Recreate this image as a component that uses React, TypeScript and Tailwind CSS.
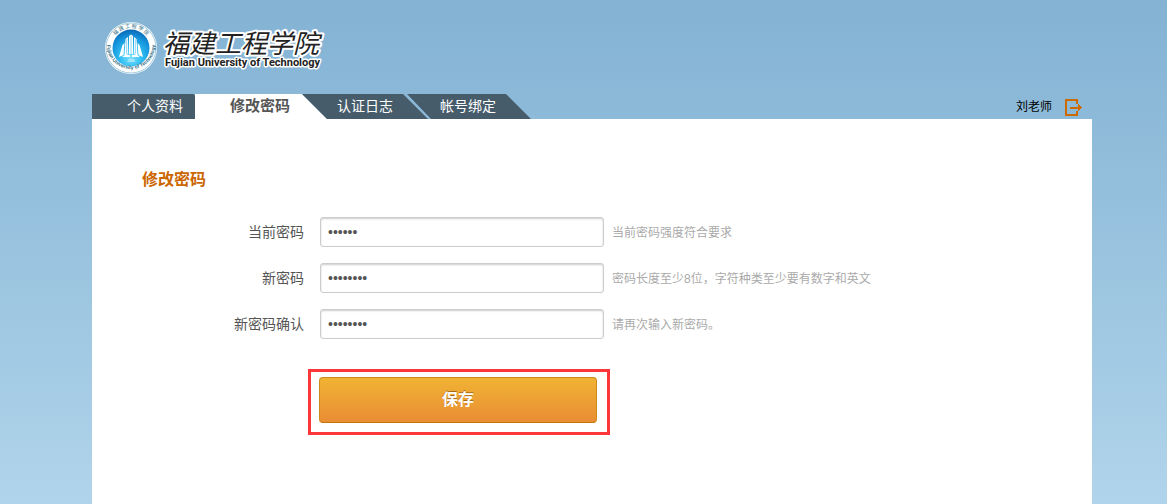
import { useState } from 'react';


interface IField {
    id: string;
    label: string;
    value: string;
    hint: string;
}

const tabs = [
    { name: '个人资料', className: 'w-[103px] rounded-tr-[2px] bg-[#465c6b] pl-[35px] text-sm text-white' },
    { name: '修改密码', className: 'w-[132px] bg-white pl-[35px] text-[15px] font-bold text-[#555] [clip-path:polygon(0_0,107px_0,100%_100%,0_100%)]' },
    { name: '认证日志', className: '-ml-[25px] w-[126px] bg-[#465c6b] pl-[35px] text-sm text-white [clip-path:polygon(0_0,101px_0,100%_100%,25px_100%)]' },
    { name: '帐号绑定', className: '-ml-[22px] w-[125px] bg-[#465c6b] pl-[34px] text-sm text-white [clip-path:polygon(1px_0,100px_0,100%_100%,25px_100%)]' },
];

const fields: IField[] = [
    { id: 'current', label: '当前密码', value: '123456', hint: '当前密码强度符合要求' },
    { id: 'next', label: '新密码', value: 'abcd1234', hint: '密码长度至少8位，字符种类至少要有数字和英文' },
    { id: 'confirm', label: '新密码确认', value: 'abcd1234', hint: '请再次输入新密码。' },
];


const Logo = () => (
    <svg width="230" height="56" viewBox="0 0 230 56" role="img" aria-label="福建工程学院">
        <defs>
            <radialGradient id="globe" cx="0.5" cy="0.75" r="0.75">
                <stop offset="0" stopColor="#7fe2ff" />
                <stop offset="0.4" stopColor="#30bdf2" />
                <stop offset="0.75" stopColor="#1390da" />
                <stop offset="1" stopColor="#0a68b4" />
            </radialGradient>
            <path id="ringTop" d="M9 28 A20 20 0 0 1 49 28" />
            <path id="ringBottom" d="M5.200 22 A24 24 0 1 0 52.800 22" />
        </defs>
        <circle cx="29" cy="28" r="26" fill="#fff" />
        <circle cx="29" cy="28" r="25" fill="none" stroke="#6ba7c6" strokeWidth="0.600" />
        <circle cx="29" cy="28" r="18.500" fill="url(#globe)" />
        <g fill="#fff">
            <path d="M27 16 L29 14.500 L31 16 V34 H27Z" />
            <path d="M23.500 19 L26 17 V34 L22.500 36Z" />
            <path d="M34.500 19 L32 17 V34 L35.500 36Z" />
            <path d="M20.500 25 L22.500 23 L21.500 35 L17 37Z" />
            <path d="M37.500 25 L35.500 23 L36.500 35 L41 37Z" />
            <path d="M23 35 H28 V37 H20Z M30 35 H35 L38 37 H30Z" />
        </g>
        <path d="M29 16 V34 M24.700 19 V34 M33.300 19 V34" stroke="#43b5e7" strokeWidth="0.600" />
        <text fill="#2e6b83" fontSize="5" fontFamily="'Noto Sans CJK SC', sans-serif">
            <textPath href="#ringTop" startOffset="50%" textAnchor="middle">福 建 工 程 学 院</textPath>
        </text>
        <text fill="#2e6b83" fontSize="5" fontWeight="700" fontFamily="'Liberation Sans', sans-serif">
            <textPath href="#ringBottom" startOffset="50%" textAnchor="middle">Fujian University of Technology</textPath>
        </text>
        <text x="29" y="42" textAnchor="middle" fontSize="3" fill="#fff" fontFamily="'Liberation Sans', sans-serif">-1896-</text>
        <g fill="#222" stroke="#fff" strokeLinejoin="round" paintOrder="stroke">
            <text x="61" y="33" fontSize="26" strokeWidth="4" fontStyle="italic" fontFamily="'Noto Sans CJK SC', sans-serif">福建工程学院</text>
            <text x="63" y="46" fontSize="11" strokeWidth="3" fontWeight="700" fontFamily="Roboto, sans-serif">Fujian University of Technology</text>
        </g>
    </svg>
);

const PasswordRow = ({ id, label, value, hint }: IField) => {
    const [text, setText] = useState(value);

    return (
        <div className="flex items-center">
            <label htmlFor={id} className="mr-4 w-[162px] text-right text-sm text-[#555]">{label}</label>
            <input
                id={id}
                type="password"
                value={text}
                onChange={(e) => setText(e.target.value)}
                aria-describedby={`${id}-hint`}
                className="h-[30px] w-[284px] rounded-[3px] border border-[#ccc] bg-white px-[7px] font-['Liberation_Sans',sans-serif] text-sm text-[#555] shadow-[inset_0_1px_2px_rgba(0,0,0,0.2)] outline-none"
            />
            <p id={`${id}-hint`} className="ml-2 pt-px text-xs text-[#aaa]">{hint}</p>
        </div>
    );
}

const App = () => {
    return (
        <div className="flex min-h-screen flex-col bg-linear-to-b from-[#83b2d3] to-[#b0d4eb] pr-[75px] pl-[92px] font-['Liberation_Sans','Noto_Sans_CJK_SC',sans-serif]">
            <header>
                <div className="pt-5 pl-[10px]">
                    <Logo />
                </div>
                <div className="mt-[18px] flex h-[25px] justify-between">
                    <nav className="flex">
                        {tabs.map(tab =>
                            <a key={tab.name} href="#" className={`block h-[25px] leading-6 whitespace-nowrap ${tab.className}`}>{tab.name}</a>
                        )}
                    </nav>
                    <div className="flex items-center pr-[9px]">
                        <span className="mr-3 pt-px text-xs text-black">刘老师</span>
                        <a href="#" aria-label="退出" className="mt-0.5">
                            <svg width="19" height="19" viewBox="0 0 19 19">
                                <path d="M13 6 V2 H2 V17 H13 V13" fill="none" stroke="#cc6a00" strokeWidth="2" />
                                <path d="M6 9 H14 V6 H15 V7 H16 V8 H17 V9 H18 V10 H17 V11 H16 V12 H15 V13 H14 V11 H6Z" fill="#cc6a00" />
                            </svg>
                        </a>
                    </div>
                </div>
            </header>
            <main className="flex-1 bg-white px-[50px] py-12">
                <h1 className="pt-px text-base font-bold text-[#c60]">修改密码</h1>
                <form className="mt-[25px]" onSubmit={(e) => e.preventDefault()}>
                    <div className="space-y-4">
                        {fields.map(field => <PasswordRow key={field.id} {...field} />)}
                    </div>
                    <div className="mt-[30px] ml-[166px] w-[302px] border-3 border-[#fc3639] pt-[5px] pb-[9px] pl-2">
                        <button
                            type="submit"
                            className="h-[46px] w-[278px] rounded-[4px] border border-[#cc8a1c] border-b-[#c57408] bg-linear-to-b from-[#f0b333] to-[#e98d34] text-base font-bold text-white [text-shadow:0_-1px_0_rgba(120,70,0,0.6)]"
                        >
                            保存
                        </button>
                    </div>
                </form>
            </main>
        </div>
    );
}

export default App;
